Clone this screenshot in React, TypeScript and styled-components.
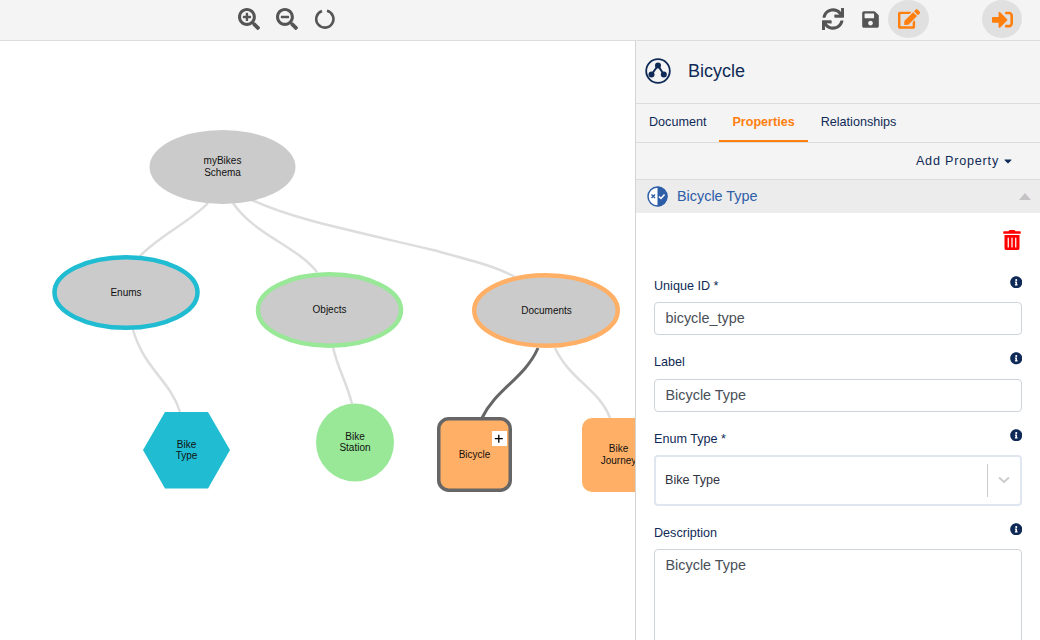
import React from 'react';
import styled, { createGlobalStyle } from 'styled-components';
import { FaSearchPlus, FaSearchMinus, FaSync, FaSave, FaEdit, FaSignInAlt, FaInfoCircle, FaTrashAlt, FaCaretDown } from 'react-icons/fa';

const NAVY = '#0f2a56';
const ORANGE = '#ff7f0e';

const edges = [
    'M208 203 C190 222 160 235 140 256',
    'M233 203 C255 235 295 245 317 272',
    'M252 200 C290 218 340 228 433 250 C470 260 495 266 515 277',
    'M133 330 C145 370 170 380 180 412',
    'M333 347 C338 370 346 380 352 404',
    'M555 348 C570 380 600 390 610 418',
];

const fields = [
    { label: 'Unique ID *', value: 'bicycle_type' },
    { label: 'Label', value: 'Bicycle Type' },
];

function NodeLabel({ x, y, lines }: { x: number; y: number; lines: string[] }) {
    const top = y + 3.5 - ((lines.length - 1) * 11.5) / 2;
    return (
        <GraphText textAnchor="middle">
            {lines.map((line, i) => (
                <tspan key={line} x={x} y={top + i * 11.5}>{line}</tspan>
            ))}
        </GraphText>
    );
}

function Graph() {
    return (
        <GraphSvg viewBox="0 41 635 599" width="635" height="599">
            {edges.map(d => <path key={d} d={d} fill="none" stroke="#dddddd" strokeWidth="2.5" />)}
            <path d="M538 348 C525 378 495 390 482 418" fill="none" stroke="#666666" strokeWidth="3" />

            <ellipse cx="222.500" cy="167" rx="73" ry="37" fill="#cbcbcb" />
            <NodeLabel x={222.5} y={166.7} lines={['myBikes', 'Schema']} />

            <ellipse cx="126" cy="292.500" rx="71.500" ry="35.250" fill="#cbcbcb" stroke="#20bcd2" strokeWidth="4.500" />
            <NodeLabel x={126} y={292} lines={['Enums']} />

            <ellipse cx="329.500" cy="310" rx="71.500" ry="35.750" fill="#cbcbcb" stroke="#98e898" strokeWidth="4.500" />
            <NodeLabel x={329.5} y={309.500} lines={['Objects']} />

            <ellipse cx="546" cy="310.500" rx="71.750" ry="35.250" fill="#cbcbcb" stroke="#ffb066" strokeWidth="4.500" />
            <NodeLabel x={546.5} y={310} lines={['Documents']} />

            <polygon points="143,450 165,412 208,412 230,450 208,488.500 165,488.500" fill="#20bcd2" />
            <NodeLabel x={186.5} y={450} lines={['Bike', 'Type']} />

            <circle cx="355" cy="442.500" r="39" fill="#98e898" />
            <NodeLabel x={355} y={442} lines={['Bike', 'Station']} />

            <rect x="438.750" y="418.750" width="71.500" height="71.500" rx="10" fill="#ffb066" stroke="#666666" strokeWidth="3.500" />
            <NodeLabel x={474.5} y={454} lines={['Bicycle']} />
            <rect x="492" y="431" width="15" height="15" fill="#ffffff" />
            <path d="M494.800 438.700 H502.800 M498.800 434.700 V442.700" stroke="#000000" strokeWidth="1.300" />

            <rect x="582" y="418" width="74" height="74" rx="10" fill="#ffb066" />
            <NodeLabel x={618.5} y={454.25} lines={['Bike', 'Journey']} />
        </GraphSvg>
    );
}

function SchemaIcon() {
    return (
        <svg width="26" height="26" viewBox="0 0 26 26">
            <circle cx="13" cy="13" r="11.800" fill="none" stroke={NAVY} strokeWidth="1.800" />
            <path d="M13 7.500 L6.500 16.500 M13 7.500 L18.800 16.500" stroke={NAVY} strokeWidth="2" />
            <circle cx="13" cy="7.500" r="3" fill={NAVY} />
            <circle cx="6.500" cy="16.500" r="3" fill={NAVY} />
            <circle cx="18.800" cy="16.500" r="3" fill={NAVY} />
        </svg>
    );
}

function EnumIcon() {
    return (
        <svg width="21" height="21" viewBox="0 0 21 21">
            <circle cx="10.500" cy="10.500" r="9.500" fill="#ffffff" stroke="#2f5ea8" strokeWidth="1.500" />
            <path d="M10.500 0.500 A10 10 0 0 1 10.500 20.500 Z" fill="#2f5ea8" />
            <path d="M4.500 8.500 L8 12 M8 8.500 L4.500 12" stroke="#2f5ea8" strokeWidth="1.400" />
            <path d="M12 10.500 L14 12.500 L17.500 8.500" fill="none" stroke="#ffffff" strokeWidth="1.500" />
        </svg>
    );
}

function ResetIcon() {
    return (
        <svg width="20" height="20" viewBox="0 0 20 20">
            <path d="M12 1.700 A8.600 8.600 0 1 1 7 1.900" fill="none" stroke="#555555" strokeWidth="2.600" />
        </svg>
    );
}

function App() {
    return (
        <>
            <GlobalStyle />
            <Page>
                <Toolbar>
                    <ToolGroup>
                        <ToolButton><FaSearchPlus /></ToolButton>
                        <ToolButton><FaSearchMinus /></ToolButton>
                        <ToolButton><ResetIcon /></ToolButton>
                    </ToolGroup>
                    <ToolGroup>
                        <ToolButton><FaSync /></ToolButton>
                        <SaveButton><FaSave /></SaveButton>
                        <RoundButton><FaEdit /></RoundButton>
                        <LoginButton><FaSignInAlt /></LoginButton>
                    </ToolGroup>
                </Toolbar>
                <Main>
                    <Canvas><Graph /></Canvas>
                    <Panel>
                        <PanelHeader>
                            <SchemaIcon />
                            <PanelTitle>Bicycle</PanelTitle>
                        </PanelHeader>
                        <Tabs>
                            <Tab>Document</Tab>
                            <Tab $active>Properties</Tab>
                            <Tab>Relationships</Tab>
                        </Tabs>
                        <ActionRow>
                            <AddProperty>Add Property <FaCaretDown /></AddProperty>
                        </ActionRow>
                        <SectionHeader>
                            <EnumIcon />
                            <SectionTitle>Bicycle Type</SectionTitle>
                            <SectionCaret />
                        </SectionHeader>
                        <Form>
                            <DeleteRow><FaTrashAlt /></DeleteRow>
                            {fields.map(f => (
                                <Field key={f.label}>
                                    <LabelRow><span>{f.label}</span><FaInfoCircle /></LabelRow>
                                    <TextInput readOnly value={f.value} />
                                </Field>
                            ))}
                            <Field>
                                <LabelRow><span>Enum Type *</span><FaInfoCircle /></LabelRow>
                                <SelectBox>
                                    <SelectValue>Bike Type</SelectValue>
                                    <SelectDivider />
                                    <svg width="12" height="8" viewBox="0 0 12 8">
                                        <path d="M1 1.500 L6 6 L11 1.500" fill="none" stroke="#cccccc" strokeWidth="2" />
                                    </svg>
                                </SelectBox>
                            </Field>
                            <Field>
                                <LabelRow><span>Description</span><FaInfoCircle /></LabelRow>
                                <TextArea readOnly value="Bicycle Type" />
                            </Field>
                        </Form>
                    </Panel>
                </Main>
            </Page>
        </>
    );
}

const GlobalStyle = createGlobalStyle`
    html, body {
        margin: 0;
        height: 100%;
        overflow: hidden;
        background: #ffffff;
        font-family: "Liberation Sans", Arial, sans-serif;
    }
    * {
        box-sizing: border-box;
    }
`;

const Page = styled.div`
    width: 1040px;
    height: 640px;
    display: flex;
    flex-direction: column;
    overflow: hidden;
`;

const Toolbar = styled.div`
    height: 41px;
    flex: none;
    display: flex;
    justify-content: space-between;
    padding: 0 18px 0 230px;
    background: #f4f4f4;
    border-bottom: 1px solid #dcdcdc;
`;

const ToolGroup = styled.div`
    display: flex;
    align-items: flex-start;
`;

const ToolButton = styled.div`
    width: 38px;
    height: 38px;
    display: flex;
    align-items: center;
    justify-content: center;
    color: #555555;
    font-size: 22px;
`;

const SaveButton = styled(ToolButton)`
    width: 37px;
    font-size: 19px;
`;

const RoundButton = styled.div`
    width: 41px;
    height: 38px;
    margin-left: -1px;
    display: flex;
    align-items: center;
    justify-content: center;
    border-radius: 50%;
    background: #e0e0e0;
    color: ${ORANGE};
    font-size: 22px;
`;

const LoginButton = styled(RoundButton)`
    width: 40px;
    margin-left: 53px;
    font-size: 21px;
`;

const Main = styled.div`
    flex: 1;
    display: flex;
    min-height: 0;
`;

const Canvas = styled.div`
    width: 635px;
    flex: none;
    overflow: hidden;
    background: #ffffff;
`;

const GraphSvg = styled.svg`
    display: block;
`;

const GraphText = styled.text`
    font-family: "Liberation Sans", Arial, sans-serif;
    font-size: 10px;
    fill: #111111;
`;

const Panel = styled.div`
    flex: 1;
    display: flex;
    flex-direction: column;
    border-left: 1px solid #d4d4d4;
    background: #ffffff;
    min-width: 0;
`;

const PanelHeader = styled.div`
    height: 63px;
    flex: none;
    display: flex;
    align-items: center;
    gap: 17px;
    padding: 0 0 2px 9px;
    background: #f4f4f4;
    border-bottom: 1px solid #dcdcdc;
`;

const PanelTitle = styled.div`
    color: ${NAVY};
    font-size: 18px;
`;

const Tabs = styled.div`
    height: 39px;
    flex: none;
    display: flex;
    background: #f4f4f4;
    border-bottom: 1px solid #dcdcdc;
`;

const Tab = styled.div<{ $active?: boolean }>`
    height: 38px;
    padding: 11px 13px 0;
    font-size: 12.600px;
    font-weight: ${p => (p.$active ? 700 : 400)};
    color: ${p => (p.$active ? ORANGE : NAVY)};
    border-bottom: 2px solid ${p => (p.$active ? ORANGE : 'transparent')};
`;

const ActionRow = styled.div`
    height: 37px;
    flex: none;
    display: flex;
    align-items: center;
    justify-content: flex-end;
    padding: 0 26px 0 0;
    background: #f4f4f4;
    border-bottom: 1px solid #dcdcdc;
`;

const AddProperty = styled.div`
    display: flex;
    align-items: center;
    gap: 3px;
    color: ${NAVY};
    font-size: 12.600px;
    letter-spacing: 0.800px;
    svg {
        font-size: 12px;
    }
`;

const SectionHeader = styled.div`
    height: 33px;
    flex: none;
    display: flex;
    align-items: center;
    gap: 9px;
    padding: 0 9px 1px 11px;
    background: #ececec;
`;

const SectionTitle = styled.div`
    flex: 1;
    color: #2f5ea8;
    font-size: 14.400px;
`;

const SectionCaret = styled.div`
    width: 0;
    height: 0;
    border-left: 6.500px solid transparent;
    border-right: 6.500px solid transparent;
    border-bottom: 7px solid #c4c2c4;
`;

const Form = styled.div`
    flex: 1;
    padding: 17px 18px 0;
    background: #ffffff;
    min-height: 0;
`;

const DeleteRow = styled.div`
    height: 23px;
    display: flex;
    justify-content: flex-end;
    color: #ff0000;
    font-size: 20px;
    margin-bottom: 22.500px;
`;

const Field = styled.div`
    margin-bottom: 17px;
`;

const LabelRow = styled.div`
    height: 19px;
    display: flex;
    justify-content: space-between;
    margin-bottom: 7.500px;
    color: ${NAVY};
    font-size: 12.600px;
    line-height: 21px;
    svg {
        font-size: 12.500px;
    }
`;

const TextInput = styled.input`
    display: block;
    width: 100%;
    height: 33px;
    padding: 0 10.500px 1px;
    border: 1px solid #ced4da;
    border-radius: 4px;
    outline: none;
    color: #495057;
    font-family: inherit;
    font-size: 14.400px;
`;

const SelectBox = styled.div`
    height: 50.500px;
    display: flex;
    align-items: center;
    padding: 0 10px 0 9px;
    border: 2px solid #e0e6f0;
    border-radius: 4px;
`;

const SelectValue = styled.div`
    flex: 1;
    color: #333344;
    font-size: 12.600px;
`;

const SelectDivider = styled.div`
    width: 1px;
    height: 33px;
    margin-right: 10px;
    background: #cccccc;
`;

const TextArea = styled.textarea`
    display: block;
    width: 100%;
    height: 140px;
    padding: 7px 10.500px;
    border: 1px solid #ced4da;
    border-radius: 4px;
    outline: none;
    resize: none;
    color: #495057;
    font-family: inherit;
    font-size: 14.400px;
`;

export default App;
